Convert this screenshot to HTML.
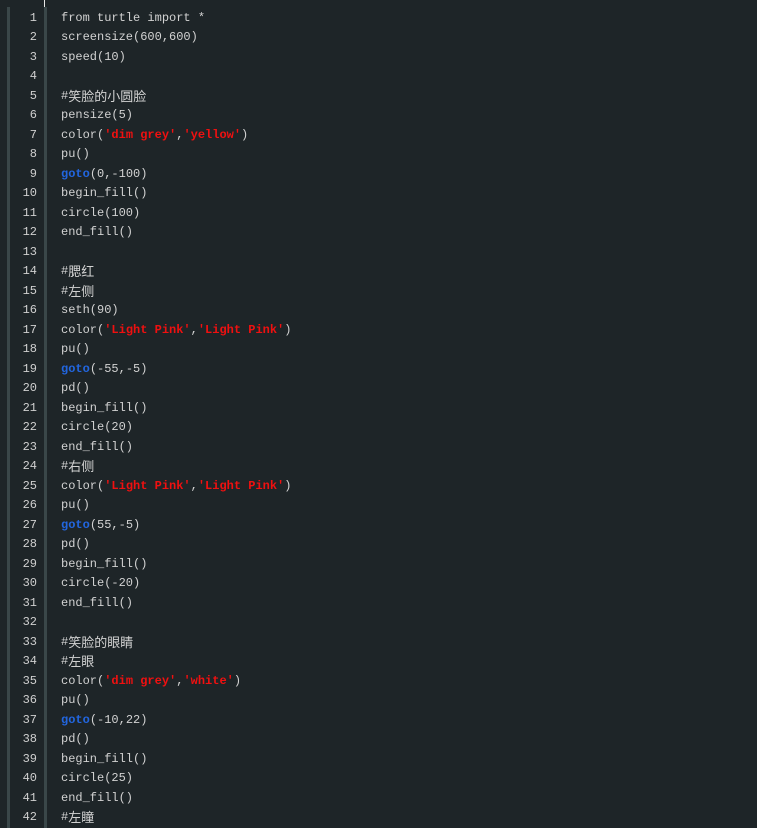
<!DOCTYPE html>
<html><head><meta charset="utf-8"><style>
body{margin:0;width:757px;height:828px;background:#1e2528;overflow:hidden;position:relative;font-family:"Liberation Mono","Noto Sans CJK SC",monospace;font-size:12px;color:#d2d2d2}
.lb{position:absolute;left:7px;top:7px;width:3px;height:821px;background:#3a4749}
.wl{position:absolute;left:44px;top:0;width:1px;height:7px;background:#e8e8e8}
.sep{position:absolute;left:44px;top:7px;width:3px;height:821px;background:#3a4749}
.ln{position:absolute;left:0;width:37px;text-align:right;color:#d0d0d0;line-height:16px;height:16px}
.c{position:absolute;left:61px;white-space:pre;line-height:16px;height:16px}
.s{color:#f01010;font-weight:bold}
.k{color:#2266e0;font-weight:bold}
.z{font-family:"Noto Sans CJK SC",sans-serif;font-size:13px;line-height:16px;vertical-align:top}
</style></head><body>
<div class="lb"></div><div class="wl"></div><div class="sep"></div>
<div id="code"></div>
<script>
var L=["from turtle import *","screensize(600,600)","speed(10)","","#<z>笑脸的小圆脸</z>","pensize(5)","color(<s>'dim grey'</s>,<s>'yellow'</s>)","pu()","<k>goto</k>(0,-100)","begin_fill()","circle(100)","end_fill()","","#<z>腮红</z>","#<z>左侧</z>","seth(90)","color(<s>'Light Pink'</s>,<s>'Light Pink'</s>)","pu()","<k>goto</k>(-55,-5)","pd()","begin_fill()","circle(20)","end_fill()","#<z>右侧</z>","color(<s>'Light Pink'</s>,<s>'Light Pink'</s>)","pu()","<k>goto</k>(55,-5)","pd()","begin_fill()","circle(-20)","end_fill()","","#<z>笑脸的眼睛</z>","#<z>左眼</z>","color(<s>'dim grey'</s>,<s>'white'</s>)","pu()","<k>goto</k>(-10,22)","pd()","begin_fill()","circle(25)","end_fill()","#<z>左瞳</z>"];
var h="";
for(var i=0;i<L.length;i++){var y=10+i*19.49;
var t=L[i].replace(/<s>/g,'<span class="s">').replace(/<\/s>/g,'</span>').replace(/<k>/g,'<span class="k">').replace(/<\/k>/g,'</span>').replace(/<z>/g,'<span class="z">').replace(/<\/z>/g,'</span>');
h+='<div class="ln" style="top:'+y+'px">'+(i+1)+'</div><div class="c" style="top:'+y+'px">'+t+'</div>';}
document.getElementById('code').innerHTML=h;
</script>
</body></html>
